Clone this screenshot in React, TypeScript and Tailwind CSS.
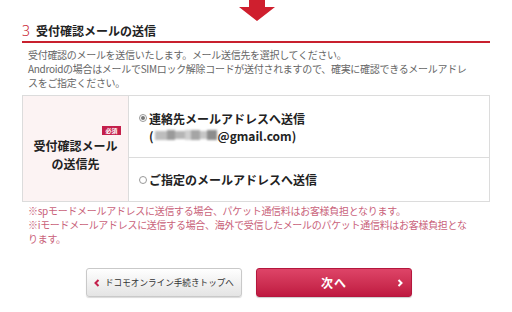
const jp = "font-['Noto_Sans_CJK_JP','Noto_Sans',sans-serif]";

const Radio = ({ checked }: { checked?: boolean }) => (
  <span className="inline-flex w-[8px] h-[8px] rounded-full border border-[#999] bg-white items-center justify-center mr-[2px] shrink-0">
    {checked && <span className="w-[4px] h-[4px] rounded-full bg-[#777]" />}
  </span>
);

const BlurredEmail = () => (
  <span className="inline-flex items-center w-[62px] h-[12px] blur-[1px] align-middle mx-[1px]">
    <span className="w-[12px] h-[9px] bg-[#bdbdbd]" />
    <span className="w-[8px] h-[10px] bg-[#9a9a9a]" />
    <span className="w-[10px] h-[8px] bg-[#b5b5b5]" />
    <span className="w-[6px] h-[10px] bg-[#cfcfcf]" />
    <span className="w-[9px] h-[10px] bg-[#a5a5a5]" />
    <span className="w-[7px] h-[8px] bg-[#c6c6c6]" />
    <span className="w-[10px] h-[10px] bg-[#8c8c8c]" />
  </span>
);

export default function App() {
  return (
    <div className={`w-[512px] h-[312px] bg-white overflow-hidden ${jp}`}>
      <div className="flex justify-center pl-[2px]">
        <svg width="38" height="21" viewBox="0 0 38 21">
          <path d="M11 0 H27 V7 H37 L19 21 L1 7 H11 Z" fill="#cf1f2e" />
        </svg>
      </div>

      <div className="px-[22px]">
        <div className="flex items-center h-[22px] border-b-2 border-[#c8202e]">
          <span className="text-[14px] text-[#c8202e] leading-none mr-[6px] font-light font-['Noto_Sans',sans-serif]">3</span>
          <span className="text-[12px] font-bold text-[#222] leading-none">受付確認メールの送信</span>
        </div>

        <div className="mt-[5px] pl-[6px] text-[10px] tracking-[-0.3px] leading-[14px] text-[#666] whitespace-nowrap">
          受付確認のメールを送信いたします。メール送信先を選択してください。
          <br />
          Androidの場合はメールでSIMロック解除コードが送付されますので、確実に確認できるメールアドレ
          <br />
          スをご指定ください。
        </div>

        <div className="mt-[5px] flex h-[107px] border border-[#dcdcdc]">
          <div className="w-[106px] bg-[#fcf3f3] border-r border-[#dcdcdc] flex items-center justify-center pt-[2px]">
            <div className="w-[90px] flex flex-col">
              <div className="flex justify-end">
                <span className="bg-[#c41f4b] text-white text-[6px] font-bold leading-[9px] px-[3px]">必須</span>
              </div>
              <div className="mt-[2px] text-center text-[12px] font-bold leading-[18px] text-[#222]">
                受付確認メール
                <br />
                の送信先
              </div>
            </div>
          </div>
          <div className="flex-1 flex flex-col">
            <div className="h-[62px] border-b border-[#dcdcdc] flex items-center pl-[10px]">
              <div className="text-[12px] font-bold leading-[17px] text-[#222]">
                <div className="flex items-center">
                  <Radio checked />
                  連絡先メールアドレスへ送信
                </div>
                <div className="pl-[10px] flex items-center">
                  (<BlurredEmail />@gmail.com)
                </div>
              </div>
            </div>
            <div className="flex-1 flex items-center pl-[10px]">
              <div className="flex items-center text-[12px] font-bold leading-[17px] text-[#222]">
                <Radio />
                ご指定のメールアドレスへ送信
              </div>
            </div>
          </div>
        </div>

        <div className="mt-[2px] pl-[6px] text-[10px] tracking-[-0.3px] leading-[14px] text-[#c9627a] whitespace-nowrap">
          ※spモードメールアドレスに送信する場合、パケット通信料はお客様負担となります。
          <br />
          ※iモードメールアドレスに送信する場合、海外で受信したメールのパケット通信料はお客様負担とな
          <br />
          ります。
        </div>

        <div className="mt-[22px] flex gap-[14px] pl-[64px]">
          <button className="w-[156px] h-[29px] rounded-[3px] border border-[#c9c9c9] bg-gradient-to-b from-white to-[#e4e4e4] shadow-[0_1px_1px_rgba(0,0,0,0.15)] flex items-center pl-[7px]">
            <svg width="6" height="8" viewBox="0 0 6 8" className="mr-[5px]">
              <path d="M4.5 1 L1.5 4 L4.5 7" stroke="#c41f4b" strokeWidth="2" fill="none" />
            </svg>
            <span className="text-[8.6px] text-[#333] leading-none">ドコモオンライン手続きトップへ</span>
          </button>
          <button className="relative w-[156px] h-[29px] rounded-[3px] border border-[#b4173d] bg-gradient-to-b from-[#de4468] to-[#bf1840] shadow-[0_1px_1px_rgba(0,0,0,0.2)] flex items-center justify-center">
            <span className="text-[12px] font-bold text-white leading-none tracking-[1px]">次へ</span>
            <svg width="6" height="8" viewBox="0 0 6 8" className="absolute right-[8px] top-[10px]">
              <path d="M1.5 1 L4.5 4 L1.5 7" stroke="#fff" strokeWidth="2" fill="none" />
            </svg>
          </button>
        </div>
      </div>
    </div>
  );
}
